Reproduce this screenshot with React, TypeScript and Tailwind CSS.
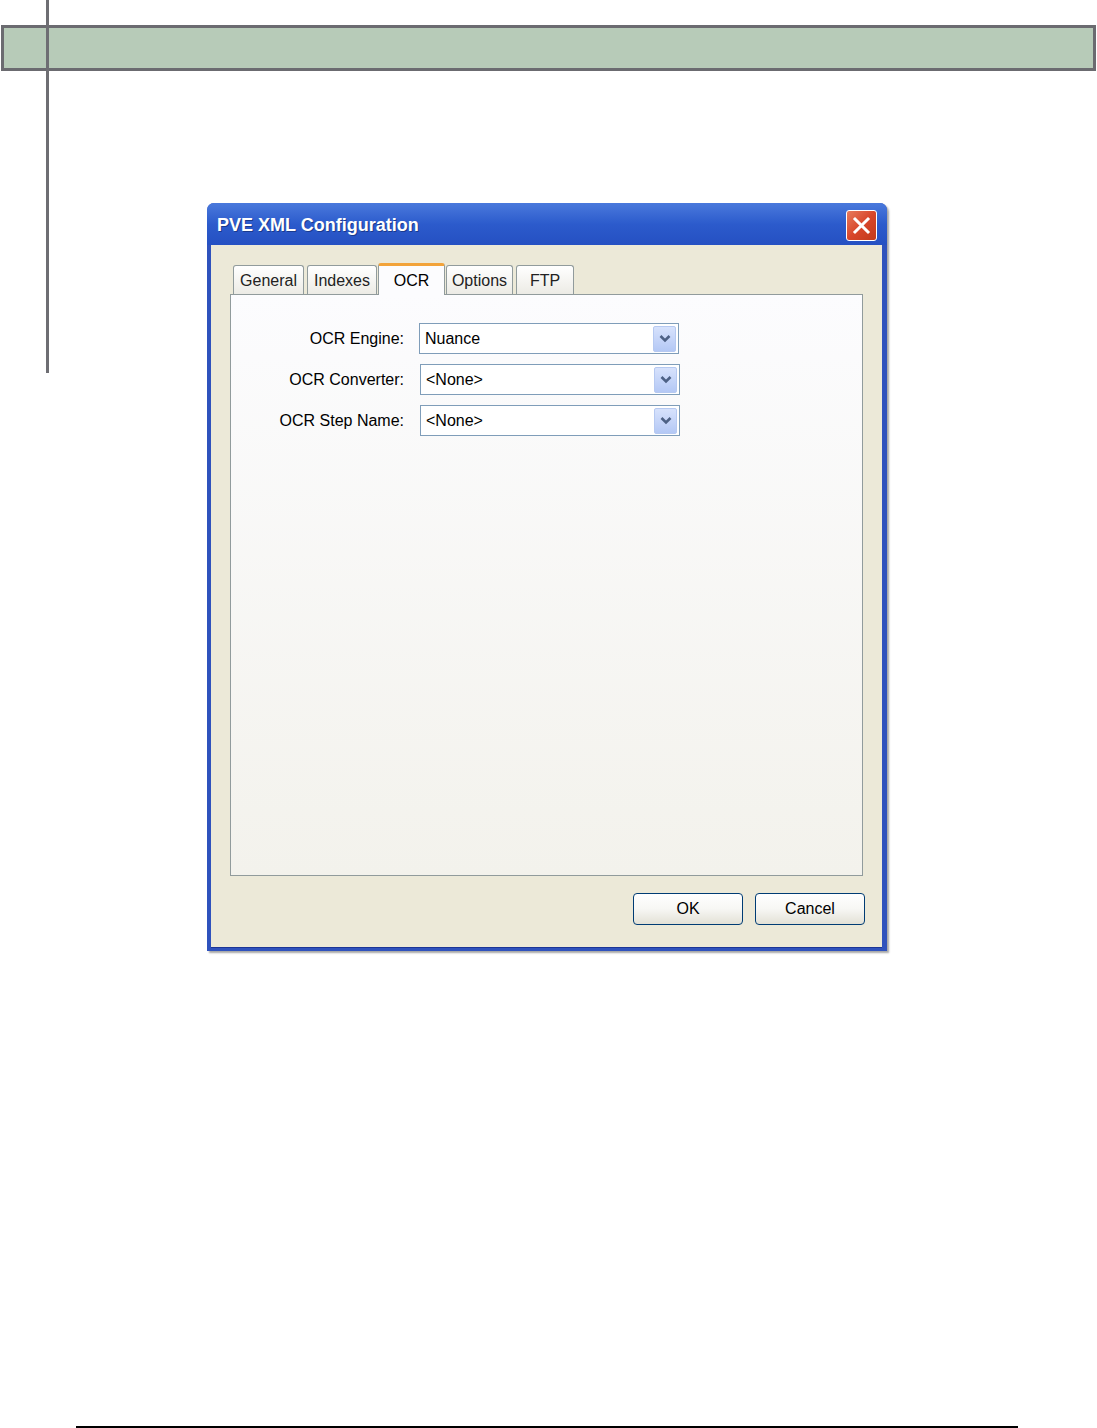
const tabs = [
  { label: "General", w: "w-[71px]" },
  { label: "Indexes", w: "w-[70px]" },
  { label: "OCR", w: "w-[67px]", active: true },
  { label: "Options", w: "w-[67px]" },
  { label: "FTP", w: "w-[58px]" },
];

const fields = [
  { label: "OCR Engine:", value: "Nuance" },
  { label: "OCR Converter:", value: "<None>" },
  { label: "OCR Step Name:", value: "<None>" },
];

const ComboBox = ({ value }: { value: string }) => (
  <div className="flex items-center w-[260px] h-[31px] bg-white border border-[#7f9db9] pl-[5px] pr-[2px]">
    <span className="flex-1 text-[16px] text-black">{value}</span>
    <span className="flex items-center justify-center w-[23px] h-[26px] rounded-[2px] border border-[#b6c9f1] bg-gradient-to-b from-[#d7e2fc] to-[#b4c8f5]">
      <svg width="12" height="9" viewBox="0 0 12 9">
        <path d="M1.5 2 L6 6.5 L10.5 2" fill="none" stroke="#4d6185" strokeWidth="2.6" />
      </svg>
    </span>
  </div>
);

const XpButton = ({ label }: { label: string }) => (
  <button className="w-[110px] h-[32px] rounded-[4px] border border-[#003c74] bg-gradient-to-b from-white via-[#f7f7f4] to-[#e3e1d6] text-[16px] text-black">
    {label}
  </button>
);

export default function App() {
  return (
    <div className="relative w-[1097px] h-[1428px] bg-white font-['Liberation_Sans',Arial,sans-serif] overflow-hidden">
      {/* vertical rule crossing the header bar */}
      <div className="absolute left-[46px] top-0 w-[3px] h-[373px] bg-[#6e6e73] z-10" />

      <div className="pt-[25px] pl-[1px]">
        <div className="w-[1095px] h-[46px] border-[3px] border-[#6b6b70] bg-[#b7cbb8]" />
      </div>

      <div className="ml-[207px] mt-[132px] w-[680px] h-[748px] flex flex-col rounded-t-[7px] bg-[#2f52bd] shadow-[2px_2px_2px_rgba(0,0,0,0.35)]">
        <div className="h-[42px] shrink-0 flex items-start justify-between pt-[7px] pl-[10px] pr-[10px] rounded-t-[7px] bg-gradient-to-b from-[#4a79dc] via-[#2c5bcc] to-[#2550c2]">
          <span className="mt-[5px] leading-[21px] text-white font-bold text-[18px] [text-shadow:1px_1px_0_#1a3a8c]">
            PVE XML Configuration
          </span>
          <span className="flex items-center justify-center w-[31px] h-[31px] rounded-[3px] border border-white bg-gradient-to-br from-[#e77a5c] via-[#d8462a] to-[#c23a1c]">
            <svg width="19" height="19" viewBox="0 0 19 19">
              <path d="M3 3 L16 16 M16 3 L3 16" stroke="white" strokeWidth="3" strokeLinecap="square" />
            </svg>
          </span>
        </div>

        <div className="flex-1 ml-[4px] mr-[5px] mb-[4px] bg-[#ece9d8] flex flex-col px-[19px] pt-[20px] pb-[22px] border-b border-[#1c3596]">
          <div className="flex items-end pl-[3px] h-[29px] shrink-0 relative z-10 gap-[3px]">
            {tabs.map((t) =>
              t.active ? (
                <div
                  key={t.label}
                  className={`${t.w} -mx-[2px] h-[32px] mb-[-1px] shrink-0 flex items-start justify-center pt-[3px] rounded-t-[3px] border-x border-[#919b9c] border-t-[3px] border-t-[#f2a33a] bg-[#fcfcfe] text-[16px] text-black`}
                >
                  {t.label}
                </div>
              ) : (
                <div
                  key={t.label}
                  className={`${t.w} h-[29px] shrink-0 flex items-center justify-center pt-[1px] rounded-t-[3px] border border-b-0 border-[#919b9c] bg-gradient-to-b from-white to-[#ecebe5] text-[16px] text-[#222]`}
                >
                  {t.label}
                </div>
              )
            )}
          </div>

          <div className="h-[582px] shrink-0 border border-[#919b9c] bg-gradient-to-b from-[#fcfcfe] to-[#f3f2ec] pt-[28px]">
            <div className="flex flex-col gap-[10px]">
              {fields.map((f, i) => (
                <div key={f.label} className="flex items-center">
                  <span className="w-[188px] pr-[15px] text-right text-[16px] text-black">{f.label}</span>
                  <div className={i === 0 ? "" : "ml-[1px]"}>
                    <ComboBox value={f.value} />
                  </div>
                </div>
              ))}
            </div>
          </div>

          <div className="flex justify-end gap-[12px] mt-[17px] -mr-[2px]">
            <XpButton label="OK" />
            <XpButton label="Cancel" />
          </div>
        </div>
      </div>

      <div className="ml-[76px] mt-[475px] w-[942px] h-[2px] bg-black" />
    </div>
  );
}
